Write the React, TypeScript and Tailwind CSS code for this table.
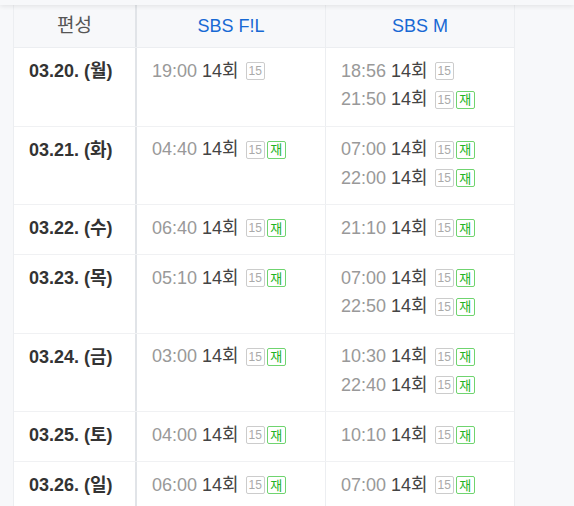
import React from 'react';

type Slot = { time: string; re?: boolean };

const rows: { date: string; fil: Slot[]; m: Slot[] }[] = [
  { date: '03.20. (월)', fil: [{ time: '19:00' }], m: [{ time: '18:56' }, { time: '21:50', re: true }] },
  { date: '03.21. (화)', fil: [{ time: '04:40', re: true }], m: [{ time: '07:00', re: true }, { time: '22:00', re: true }] },
  { date: '03.22. (수)', fil: [{ time: '06:40', re: true }], m: [{ time: '21:10', re: true }] },
  { date: '03.23. (목)', fil: [{ time: '05:10', re: true }], m: [{ time: '07:00', re: true }, { time: '22:50', re: true }] },
  { date: '03.24. (금)', fil: [{ time: '03:00', re: true }], m: [{ time: '10:30', re: true }, { time: '22:40', re: true }] },
  { date: '03.25. (토)', fil: [{ time: '04:00', re: true }], m: [{ time: '10:10', re: true }] },
  { date: '03.26. (일)', fil: [{ time: '06:00', re: true }], m: [{ time: '07:00', re: true }] },
];

function Line({ slot }: { slot: Slot }) {
  return (
    <div className="flex items-center h-[28.5px]">
      <span className="text-[#999]">{slot.time}</span>
      <span className="ml-[5px] text-[#444]">14회</span>
      <span className="ml-[7px] flex h-[18px] w-[19px] items-center justify-center rounded-[2px] border border-[#ccc] text-[12px] leading-none text-[#aaa]">15</span>
      {slot.re && (
        <span className="ml-[2px] flex h-[18px] w-[19px] items-center justify-center rounded-[2px] border border-[#6fd46f] text-[13px] leading-none text-[#22b322]">재</span>
      )}
    </div>
  );
}

export default function App() {
  return (
    <div className="min-h-[506px] bg-[#f7f8fa] font-['Liberation_Sans','Noto_Sans_CJK_KR',sans-serif]">
      <div className="h-[5px] bg-[#f7f8fa] shadow-[0_1px_5px_rgba(0,0,0,0.1)] relative z-10" />
      <div className="ml-[13px] w-[502px] border-l border-r border-[#eceef1]">
        <div className="flex h-[43px] bg-[#f7f8fa] border-b border-[#eceef1]">
          <div className="w-[123px] border-r-2 border-[#e1e4e8] flex items-center justify-center text-[19px] text-[#555]">편성</div>
          <div className="w-[189px] border-r border-[#eceef1] flex items-center justify-center text-[18px] text-[#1769d4]">SBS F!L</div>
          <div className="flex-1 flex items-center justify-center text-[18px] text-[#1769d4]">SBS M</div>
        </div>
        {rows.map((r) => (
          <div key={r.date} className="flex bg-white border-b border-[#f0f1f3] text-[18px]">
            <div className="w-[123px] border-r-2 border-[#e1e4e8] pl-[15px] pt-[9px] pb-[11.5px] text-[18px] font-bold text-[#333] leading-[28.5px]">{r.date}</div>
            <div className="w-[189px] border-r border-[#eceef1] pl-[15px] pt-[9px] pb-[11.5px]">
              {r.fil.map((s, i) => <Line key={i} slot={s} />)}
            </div>
            <div className="flex-1 pl-[15px] pt-[9px] pb-[11.5px]">
              {r.m.map((s, i) => <Line key={i} slot={s} />)}
            </div>
          </div>
        ))}
      </div>
    </div>
  );
}
